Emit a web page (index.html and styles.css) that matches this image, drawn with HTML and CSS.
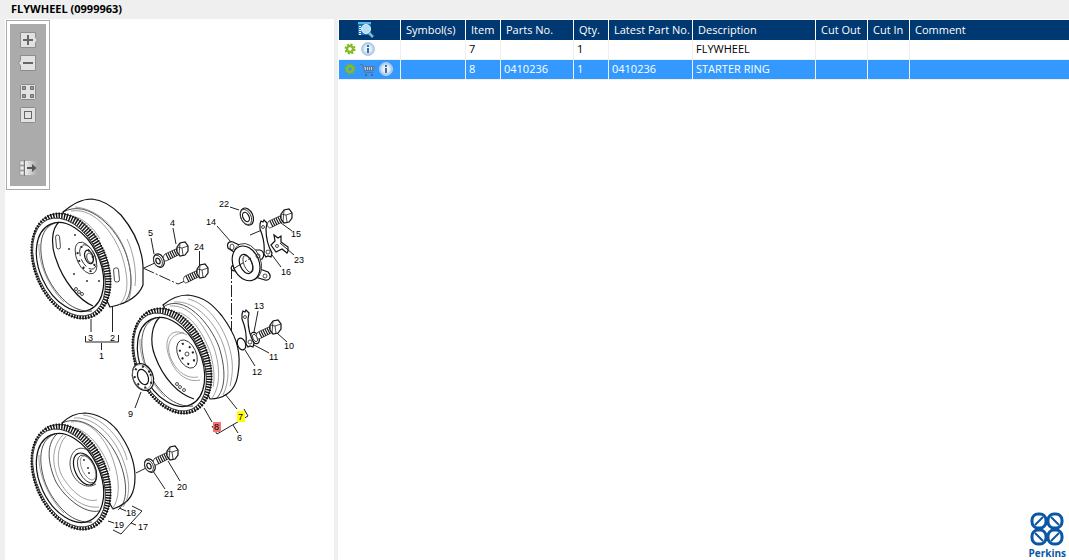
FILE: index.html
```html
<!DOCTYPE html>
<html lang="en">
<head>
  <meta charset="UTF-8" />
  <meta name="viewport" content="width=device-width, initial-scale=1.0" />
  <title>FLYWHEEL (0999963)</title>
  <link rel="stylesheet" href="styles.css">
</head>
<body>
  <header class="title-bar">
    <h1>FLYWHEEL (0999963)</h1>
  </header>

  <main class="workspace">
    <section class="drawing-pane">
      <div class="toolbar">
        <button type="button" aria-label="Zoom in">
          <svg viewBox="0 0 20 16"><path class="key" d="M2.500 .5h15v5l2 2.500-2 2.500v5h-15z"/><path class="glyph" d="M5 8h10M10 3v10"/></svg>
        </button>
        <button type="button" aria-label="Zoom out">
          <svg viewBox="0 0 20 16"><path class="key" d="M2.500 .5h15v15h-15v-5L.5 8l2-2.500z"/><path class="glyph" d="M5 8h10"/></svg>
        </button>
        <button type="button" class="group-start" aria-label="Fit to window">
          <svg viewBox="0 0 20 16"><rect class="key" x="2.500" y=".5" width="15" height="15" rx="1"/><path class="box" d="M4.500 2.500h3v3h-3zM12.500 2.500h3v3h-3zM4.500 10.500h3v3h-3zM12.500 10.500h3v3h-3z"/></svg>
        </button>
        <button type="button" aria-label="Actual size">
          <svg viewBox="0 0 20 16"><rect class="key" x="2.500" y=".5" width="15" height="15" rx="1"/><rect x="6.500" y="4.500" width="7" height="7" fill="none" stroke="#666"/></svg>
        </button>
        <button type="button" class="group-end" aria-label="Hide list">
          <svg viewBox="0 0 20 16">
            <defs><linearGradient id="fade"><stop offset="0" stop-color="#eee"/><stop offset="1" stop-color="#ababab"/></linearGradient></defs>
            <path d="M7 1h12v14H7z" fill="url(#fade)"/>
            <path d="M2 1h4v4H2zM2 6h4v4H2zM2 11h4v4H2z" fill="#eee" stroke="#888" stroke-width=".6"/>
            <path d="M6.500 0v16" stroke="#777"/>
            <path d="M9 8h7" stroke="#555" stroke-width="2"/><path d="M14 4l4.500 4-4.500 4z" fill="#555"/>
          </svg>
        </button>
      </div>

      <svg class="drawing" viewBox="5 190 329 370" role="img" aria-label="Exploded view of the flywheel">
        <defs>
          <!-- toothed ring, centred on 0,0 -->
          <g id="ring">
            <g transform="rotate(-23)">
              <ellipse rx="36" ry="55" class="solid"/>
              <ellipse rx="33" ry="52" class="teeth"/>
            </g>
            <ellipse rx="32" ry="52" transform="translate(-2 1) rotate(-25)" class="solid"/>
            <ellipse rx="30" ry="47" transform="translate(-1 1) rotate(-25)" class="solid bold"/>
            <path d="M-16-43C-30-38-32-22-29-6C-26 12-15 27-5 36C3 43 13 46 21 45"/>
            <path class="fine" d="M-32-22C-33-3-22 22-7 36"/>
          </g>
          <g id="bolt">
            <path class="solid" d="M-4-1L-17 5C-20 8-18 12-16 12L-2 5z"/>
            <path class="thread" d="M-16 5l3 6M-14 4l3 6M-12 3l3 6M-10 2l3 6M-8 1l3 6M-6 0l3 6"/>
            <path class="solid bold" d="M-5-2L-2-6L3-7L6-3L6 2L3 6L-2 7L-5 3z"/>
            <path d="M-5-2L0-1L6-3M0-1L1 6M-2-6L-3 6"/>
          </g>
          <g id="washer">
            <ellipse cx="1" rx="5" ry="7" transform="rotate(-25)" class="solid bold"/>
            <ellipse rx="4" ry="6" transform="rotate(-25)" class="solid"/>
            <ellipse rx="2" ry="3" transform="rotate(-25)" class="solid bold"/>
          </g>
          <g id="tab">
            <path class="solid bold" d="M-5-17l1-3 2 1 1-2 3 3-1 6C1-4 3 5 7 12l-1 4-3-1-2 1-2-3C0 3-2-5-5-12z"/>
            <circle cx="-2" cy="-14" r="1.500"/><circle cx="3" cy="11" r="2"/>
          </g>
        </defs>

        <!-- wheel 1 -->
        <g transform="translate(71 266)">
          <path class="solid bold" d="M-8-54C2-62 10-67 21-67C34-66 43-58 50-51C65-33 71-16 72 0V19C67 32 54 38 39 41z"/>
          <path d="M-8-54C18-68 47-36 55-12C62 8 62 30 52 38"/>
          <path class="fine" d="M0-55C25-59 44-30 51-10C58 12 58 30 48 39M4-59C30-57 49-33 56-10C61 8 62 23 57 36M-2-50C12-50 23-37 29-27M56-27C62-15 66 5 64 20"/>
          <rect x="43" y="2" width="5" height="14" rx="2" transform="rotate(-5 45 9)"/>
          <path d="M72 2l35 16 7-3" class="chain"/><path d="M73 2l13-6" class="chain"/>
          <use href="#ring"/>
          <path class="bold" d="M-12-44C-20-37-20-20-15-7C-8 15 8 34 22 40"/>
          <rect x="-15" y="-31" width="4" height="14" rx="2" transform="rotate(-5 -13 -24)"/>
          <ellipse cx="15" cy="-8" rx="9" ry="17" transform="rotate(-25 15 -8)" class="solid"/>
          <ellipse cx="17" cy="-9" rx="7" ry="13" transform="rotate(-25 17 -9)" stroke-dasharray="9 3"/>
          <ellipse cx="18" cy="-9" rx="4" ry="7" transform="rotate(-20 18 -9)" class="solid bold"/>
          <ellipse cx="19" cy="-8" rx="3" ry="5" transform="rotate(-20 19 -8)"/>
          <ellipse cx="15" cy="-7" rx="7" ry="13" transform="rotate(-25 15 -7)" class="holes"/>
          <g class="dots"><circle cx="4" cy="-31" r="1"/><circle cx="-2" cy="-17" r="1"/><circle cx="3" cy="8" r="1"/><circle cx="16" cy="15" r="1"/><circle cx="28" cy="15" r="1"/></g>
          <circle cx="5" cy="23" r="1.500"/><circle cx="8" cy="26" r="1.500"/><circle cx="11" cy="28" r="1.500"/>
        </g>
        <use href="#washer" x="158" y="261"/>
        <use href="#bolt" x="182" y="249"/>
        <use href="#bolt" x="202" y="271"/>

        <!-- wheel 2 -->
        <path class="chain" d="M231.500 267V331"/>
        <g transform="translate(172 361)">
          <path class="solid bold" d="M-9-56C-2-62 6-66 16-66C33-64 41-56 50-45C64-26 68-12 67 4C66 17 64 27 55 33Q48 38 38 38z"/>
          <path d="M-9-54C12-68 38-38 47-14C54 8 54 28 44 38"/>
          <path class="fine" d="M-2-55C18-57 34-34 42-13C49 8 48 28 39 38M2-59C25-61 45-36 52-14C57 3 58 20 51 34M16-62C35-58 50-36 56-18C62 0 61 12 58 25M6-49C22-44 33-24 39-6C42 8 43 18 41 26"/>
          <use href="#ring"/>
          <path class="bold" d="M-12-44C-20-37-23-20-17-5C-9 17 6 33 22 38"/>
          <path class="fine" d="M15-26C-2-36-10-20-2-2C3 12 15 22 28 19M12-28C-1-28-8-16 0 0C6 12 16 18 26 16"/>
          <ellipse cx="15" cy="-7" rx="9" ry="15" transform="rotate(-25 15 -7)" class="solid"/>
          <ellipse cx="15" cy="-7" rx="6" ry="11" transform="rotate(-25 15 -7)" class="holes"/>
          <circle cx="15" cy="-7" r="2"/>
          <circle cx="5" cy="23" r="1.500"/><circle cx="8" cy="26" r="1.500"/><circle cx="12" cy="29" r="1.500"/>
        </g>
        <g transform="translate(143 377)">
          <ellipse rx="10" ry="14" transform="rotate(-23)" class="solid bold"/>
          <ellipse rx="9" ry="13" transform="translate(-1) rotate(-23)" class="fine"/>
          <ellipse rx="8" ry="11" transform="rotate(-23)" class="holes"/>
          <ellipse rx="5" ry="8" transform="rotate(-23)" class="solid bold"/>
        </g>

        <!-- hub, tab washers and bolts on the right -->
        <g transform="translate(247 263)">
          <path class="solid bold" d="M-10-9L-19-15C-21-21-16-23-12-20L-3-16M6-13L12-13C17-13 18-7 15-4L8-2M10 5L21 9C25 13 23 18 18 17L5 13M-10 4L-15 3M-12 2L-15 3C-17 6-15 8-12 8L-6 12"/>
          <ellipse cx="1" cy="-1" rx="13" ry="19" transform="rotate(-23)" class="solid"/>
          <ellipse cx="-1" rx="13" ry="18" transform="rotate(-23)" class="solid bold"/>
          <ellipse rx="6" ry="10" transform="translate(-1 1) rotate(-23)" class="solid bold"/>
          <ellipse rx="4" ry="9" transform="translate(1 1) rotate(-23)"/>
          <ellipse cx="-15" cy="-16" rx="2" ry="3"/><circle cx="11" cy="-7" r="2"/><circle cx="18" cy="13" r="2"/>
          <path d="M-14 6L4-5" class="chain"/>
        </g>
        <g transform="translate(246 217) rotate(-25)">
          <ellipse cx="1" rx="6" ry="9" class="solid bold"/><ellipse rx="5" ry="8" class="solid"/><ellipse rx="3" ry="5" class="solid bold"/>
        </g>
        <path class="chain" d="M250 235l12-5"/>
        <path class="solid bold" d="M271 245l4-4-1-6 4 3 3-2v6l7 5v4l-1 2-5-4-6 3z"/>
        <circle cx="277" cy="246" r="1.500"/>
        <use href="#tab" x="265" y="241"/>
        <use href="#bolt" x="286" y="216"/>
        <ellipse cx="255" cy="338" rx="4" ry="6" transform="rotate(-25 255 338)" class="solid bold"/>
        <use href="#bolt" x="275" y="327"/>
        <ellipse cx="255" cy="338" rx="2" ry="4" transform="rotate(-25 255 338)" class="solid"/>
        <use href="#tab" x="247" y="331"/>
        <ellipse cx="241.500" cy="344" rx="4" ry="6" transform="rotate(-20 241.500 344)" class="bold"/>

        <!-- wheel 3 -->
        <g transform="translate(71 477)">
          <path class="solid bold" d="M-9-54C-3-60 5-64 14-64C30-63 40-54 46-47C58-31 64-15 64 0C64 15 60 26 42 32z"/>
          <path d="M-9-54C13-64 37-42 48-17C57 5 57 25 47 33"/>
          <path class="fine" d="M0-55C20-59 37-35 43-14C49 4 49 23 41 32M3-59C25-61 45-37 52-17C60 5 59 20 52 30M12-62C33-60 53-34 56-17M5-49C21-43 34-24 39-6"/>
          <use href="#ring"/>
          <path d="M-13-44C-25-34-24-15-15 5C-5 22 14 37 28 34"/>
          <path class="fine" d="M-8-42C-19-31-20-14-12 3C-4 19 12 32 28 30M-5-41C-14-32-15-12-9-1C0 14 13 26 26 23"/>
          <path d="M18-26C8-33-1-26-1-13C0 3 14 14 25 7"/>
          <ellipse cx="14" cy="-8" rx="10" ry="17" transform="rotate(-25 14 -8)" class="bold"/>
          <ellipse cx="16" cy="-8" rx="8" ry="15" transform="rotate(-25 16 -8)"/>
          <ellipse cx="17" cy="-9" rx="6" ry="13" transform="rotate(-25 17 -9)" class="fine"/>
          <g class="dots"><circle cx="13" cy="-17" r="1"/><circle cx="17" cy="-9" r="1"/><circle cx="18" cy="-4" r="1"/></g>
        </g>
        <path class="chain" d="M136 473l10-5"/>
        <use href="#washer" x="149" y="466"/>
        <use href="#bolt" x="172" y="453"/>

        <!-- leader lines -->
        <path class="leader" d="M91 319v13M112.500 307v25M85.500 336v6h33v-7M101.500 343v7M151 238l3 16M173 228l3 16M199.500 251v14M230 207l9 3M217 226l14 16M281 223l11 8M280 243l14 12M272 255l9 12M258 311l-4 21M277 333l10 9M254 345l15 8M245 350l10 16M141 392l-6 16M204 408l8 14M225 394l12 15M212 426l5 8 31-18-4-7M233 425l5 8M153 471l12 18M168 461l12 20M119 508l7 3M108 521l6 2M132 506l10 5-21 23-8-4M131 523l5 2"/>

        <!-- item numbers -->
        <rect x="237" y="411" width="8" height="11" fill="#ff0" stroke="none"/>
        <rect x="213" y="422" width="8" height="10" fill="#f27474" stroke="none"/>
        <g class="labels">
          <text x="88" y="341">3</text><text x="110" y="341">2</text><text x="99" y="359">1</text>
          <text x="148" y="236">5</text><text x="170" y="226">4</text><text x="194" y="250">24</text>
          <text x="219" y="207">22</text><text x="206" y="225">14</text><text x="291" y="237">15</text>
          <text x="294" y="263">23</text><text x="281" y="275">16</text><text x="254" y="309">13</text>
          <text x="284" y="349">10</text><text x="269" y="360">11</text><text x="252" y="375">12</text>
          <text x="128" y="417">9</text><text x="214" y="430">8</text><text x="238" y="420">7</text>
          <text x="237" y="441">6</text><text x="177" y="490">20</text><text x="164" y="497">21</text>
          <text x="126" y="516">18</text><text x="114" y="528">19</text><text x="138" y="530">17</text>
        </g>
      </svg>
    </section>

    <section class="list-pane">
      <table class="parts">
        <colgroup>
          <col class="c-tools"><col class="c-symbol"><col class="c-item"><col class="c-part"><col class="c-qty">
          <col class="c-latest"><col class="c-desc"><col class="c-out"><col class="c-in"><col>
        </colgroup>
        <thead>
          <tr>
            <th class="find">
              <svg width="18" height="18" viewBox="0 0 18 18" role="img" aria-label="Search list">
                <path d="M1 2h13v12H1z" fill="#1976bd"/><path d="M1 1h13v2H1z" fill="#59b7ea"/><path d="M3 5v9" stroke="#fff" stroke-width="2" stroke-dasharray="1 1"/>
                <circle cx="9" cy="8" r="4.500" fill="#b8dcf0" stroke="#e3f2fb"/><path d="M12 12l4 4" stroke="#7fb9dd" stroke-width="2.500"/>
              </svg>
            </th>
            <th>Symbol(s)</th><th>Item</th><th>Parts No.</th><th>Qty.</th><th>Latest Part No.</th>
            <th>Description</th><th>Cut Out</th><th>Cut In</th><th>Comment</th>
          </tr>
        </thead>
        <tbody>
          <tr>
            <td>
              <div class="icons">
                <svg class="gear" viewBox="0 0 12 12"><use href="#gear"/></svg>
                <svg class="info" viewBox="0 0 14 14"><use href="#info"/></svg>
              </div>
            </td>
            <td></td><td>7</td><td></td><td>1</td><td></td><td>FLYWHEEL</td><td></td><td></td><td></td>
          </tr>
          <tr class="selected">
            <td>
              <div class="icons">
                <svg class="gear" viewBox="0 0 12 12"><use href="#gear"/></svg>
                <svg class="cart" viewBox="0 0 15 13">
                  <path d="M4 3h10l-1 4H5z" fill="#b9cde4"/>
                  <path d="M0 1.500h2.500l2.500 8h8.500M3.500 3.500h11l-1.500 4H4.500M6.500 3v4M8.500 3v4M10.500 3v4M12.500 3v4" fill="none" stroke="#5f7591"/>
                  <circle cx="6" cy="12" r="1" fill="#4d5f78"/><circle cx="12" cy="12" r="1" fill="#4d5f78"/>
                </svg>
                <svg class="info" viewBox="0 0 14 14"><use href="#info"/></svg>
              </div>
            </td>
            <td></td><td>8</td><td>0410236</td><td>1</td><td>0410236</td><td>STARTER RING</td><td></td><td></td><td></td>
          </tr>
        </tbody>
      </table>

      <div class="brand">
        <svg viewBox="0 0 34 34" aria-hidden="true">
          <g fill="none" stroke="#0b57a4" stroke-width="3">
            <rect x="2" y="2" width="14" height="14" rx="6"/><rect x="18" y="2" width="14" height="14" rx="6"/>
            <rect x="2" y="18" width="14" height="14" rx="6"/><rect x="18" y="18" width="14" height="14" rx="6"/>
            <path d="M5 13l8-8M21 5l8 8M5 21l8 8M21 29l8-8" stroke-width="2"/>
          </g>
        </svg>
        <span>Perkins</span>
      </div>
    </section>
  </main>

  <svg class="sprites" aria-hidden="true">
    <defs>
      <radialGradient id="glass"><stop offset="0" stop-color="#fff"/><stop offset=".6" stop-color="#d9e9f5"/><stop offset="1" stop-color="#94bbdc"/></radialGradient>
      <g id="gear">
        <circle cx="6" cy="6" r="4.500" fill="none" stroke="#7ab51d" stroke-width="2" stroke-dasharray="2 1.530"/>
        <circle cx="6" cy="6" r="3" fill="none" stroke="#86bc25" stroke-width="2.400"/>
      </g>
      <g id="info">
        <circle cx="7" cy="7" r="6.500" fill="url(#glass)" stroke="#b4cfe6"/>
        <path d="M7 6v5M7 3v2" stroke="#3b6ea8" stroke-width="2"/>
      </g>
    </defs>
  </svg>
</body>
</html>
```
FILE: styles.css
```css
* {
  box-sizing: border-box;
}

body {
  margin: 0;
  min-height: 100vh;
  display: flex;
  flex-direction: column;
  background: #fff;
  color: #000;
  font-family: "Open Sans", "Noto Sans", sans-serif;
  font-size: 11px;
}

.title-bar {
  background: #efefef;
  height: 19px;
  padding-left: 11px;
}

.title-bar h1 {
  margin: 0;
  font-size: 11px;
  line-height: 18px;
  font-weight: bold;
}

.workspace {
  flex: 1;
  display: flex;
}

/* left pane */
.drawing-pane {
  flex: 0 0 338px;
  border-left: 5px solid #efefef;
  border-right: 4px solid #efefef;
}

.toolbar {
  width: 44px;
  height: 170px;
  margin: 1px 0 0 1px;
  padding: 11px 0;
  border: 1px solid #aaa;
  background: #ababab;
  box-shadow: inset 0 0 0 3px #fff;
  display: flex;
  flex-direction: column;
  align-items: center;
  gap: 7px;
}

.toolbar button {
  width: 20px;
  height: 16px;
  padding: 0;
  border: 0;
  background: none;
}

.toolbar svg {
  display: block;
  width: 20px;
  height: 16px;
}

.toolbar .group-start {
  margin-top: 6px;
}

.toolbar .group-end {
  margin-top: 30px;
}

.key {
  fill: #e2e2e2;
  stroke: #8c8c8c;
}

.glyph {
  stroke: #666;
  stroke-width: 2;
}

.box {
  fill: #999;
  stroke: #707070;
}

/* line drawing */
.drawing {
  display: block;
  width: 100%;
  fill: none;
  stroke: #222;
  stroke-width: 0.8;
}

.solid {
  fill: #fff;
}

.bold {
  stroke: #111;
  stroke-width: 1.2;
}

.fine {
  stroke: #777;
  stroke-width: 0.7;
}

.teeth {
  stroke: #111;
  stroke-width: 8;
  stroke-dasharray: 1.4 1.2;
}

.thread {
  stroke: #111;
  stroke-width: 1.1;
}

.holes {
  stroke: #222;
  stroke-width: 2;
  stroke-dasharray: 2 6;
}

.dots {
  fill: #333;
  stroke: none;
}

.chain {
  stroke: #222;
  stroke-width: 1;
  stroke-dasharray: 12 2 2 2;
}

.leader {
  stroke: #222;
  stroke-width: 1;
}

.labels {
  fill: #000;
  stroke: none;
  font-family: "Liberation Sans", Arial, sans-serif;
  font-size: 9px;
}

/* right pane */
.list-pane {
  flex: 1;
  min-width: 0;
  padding: 1px 0 0 1px;
  display: flex;
  flex-direction: column;
}

.parts {
  width: 100%;
  table-layout: fixed;
  border-collapse: separate;
  border-spacing: 0;
}

.c-tools { width: 62px; }
.c-symbol { width: 65px; }
.c-item { width: 35px; }
.c-part { width: 73px; }
.c-qty { width: 35px; }
.c-latest { width: 84px; }
.c-desc { width: 123px; }
.c-out { width: 52px; }
.c-in { width: 42px; }

.parts th,
.parts td {
  height: 20px;
  padding: 0 0 0 3px;
  line-height: 18px;
  text-align: left;
  vertical-align: top;
  white-space: nowrap;
  border-right: 1px solid #efefef;
  border-bottom: 1px solid #efefef;
}

.parts th {
  padding-left: 5px;
  line-height: 20px;
  background: #003872;
  color: #fff;
  font-weight: normal;
  border-right-color: #fff;
  border-bottom: 0;
}

.parts th:last-child,
.parts td:last-child {
  border-right: 0;
}

.parts .find {
  padding: 1px 0 0 18px;
}

.find svg {
  display: block;
}

.selected td {
  background: #3399ff;
  color: #fff;
}

.icons {
  display: flex;
  align-items: center;
  gap: 5px;
  height: 18px;
  padding-left: 2px;
}

.gear {
  width: 12px;
  height: 12px;
}

.cart {
  width: 15px;
  height: 13px;
}

.info {
  width: 14px;
  height: 14px;
}

.selected .icons {
  gap: 4px;
}

.brand {
  margin: auto 3px 0 auto;
  display: flex;
  flex-direction: column;
  align-items: center;
  color: #0b57a4;
  font-size: 10px;
  line-height: 14px;
  font-weight: bold;
}

.brand svg {
  width: 34px;
  height: 34px;
}

.sprites {
  position: absolute;
  width: 0;
  height: 0;
}
```
